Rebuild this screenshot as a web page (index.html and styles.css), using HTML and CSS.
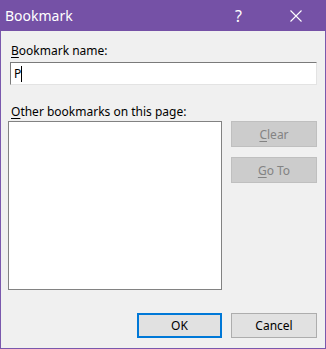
FILE: index.html
```html
<!DOCTYPE html>
<html>
<head>
<meta charset="utf-8">
<link rel="stylesheet" href="styles.css">
</head>
<body>
<div class="win">
  <div class="titlebar">
    <span class="title">Bookmark</span>
    <span class="help">?</span>
    <span class="close"><svg width="12" height="12" viewBox="0 0 12 12"><path d="M0.5 0.5L11.5 11.5M11.5 0.5L0.5 11.5" stroke="#fff" stroke-width="1.1" fill="none"/></svg></span>
  </div>
  <div class="content">
    <div class="label"><u>B</u>ookmark name:</div>
    <div class="input"><span class="val">P</span><span class="caret"></span></div>
    <div class="label label2"><u>O</u>ther bookmarks on this page:</div>
    <div class="row">
      <div class="list"></div>
      <div class="side">
        <div class="btn disabled"><u>C</u>lear</div>
        <div class="btn disabled"><u>G</u>o To</div>
      </div>
    </div>
    <div class="footer">
      <div class="btn default">OK</div>
      <div class="btn">Cancel</div>
    </div>
  </div>
</div>
</body>
</html>
```
FILE: styles.css
```css
* { box-sizing: border-box; }
html, body { margin: 0; padding: 0; }
body {
  width: 326px;
  height: 349px;
  font-family: "Noto Sans", "Open Sans", sans-serif;
  font-size: 12px;
  color: #000;
}
u { text-underline-offset: 2px; text-decoration-thickness: 1px; }
.win {
  width: 326px;
  height: 349px;
  background: #f0f0f0;
  border: 1px solid #7a58ad;
  border-top: 0;
  display: flex;
  flex-direction: column;
}
.titlebar {
  height: 31px;
  margin: 0 -1px;
  background: #7551a6;
  color: #fff;
  display: flex;
  align-items: center;
  flex-shrink: 0;
}
.title {
  font-size: 14px;
  margin-left: 5px;
  flex: 1;
  line-height: 20px;
}
.help {
  font-size: 16px;
  width: 12px;
  margin-right: 43px;
  line-height: 20px;
}
.close {
  width: 12px;
  height: 12px;
  margin-right: 24px;
  display: flex;
}
.content {
  flex: 1;
  display: flex;
  flex-direction: column;
  padding: 0 8px 0 7px;
}
.label {
  margin-top: 12px;
  margin-left: 3px;
  line-height: 15px;
  height: 15px;
}
.label2 { margin-top: 19px; }
.input {
  margin-top: 4px;
  margin-left: 2px;
  height: 23px;
  background: #fff;
  border: 1px solid;
  border-color: #7a7a7a #e3e3e3 #e3e3e3 #7a7a7a;
  display: flex;
  align-items: center;
  padding-left: 3px;
}
.caret {
  width: 1px;
  height: 16px;
  background: #000;
}
.row {
  display: flex;
  margin-top: 2px;
  gap: 9px;
}
.list {
  width: 214px;
  height: 169px;
  background: #fff;
  border: 1px solid #828282;
}
.side {
  display: flex;
  flex-direction: column;
  gap: 10px;
}
.btn {
  width: 86px;
  height: 26px;
  display: flex;
  align-items: center;
  justify-content: center;
  background: #e1e1e1;
  border: 1px solid #adadad;
}
.btn.disabled {
  background: #cccccc;
  border-color: #bfbfbf;
  color: #838383;
}
.footer {
  display: flex;
  justify-content: flex-end;
  gap: 9px;
  margin-top: 23px;
}
.footer .btn { height: 25px; }
.btn.default {
  width: 85px;
  border: 2px solid #0078d7;
}
```
